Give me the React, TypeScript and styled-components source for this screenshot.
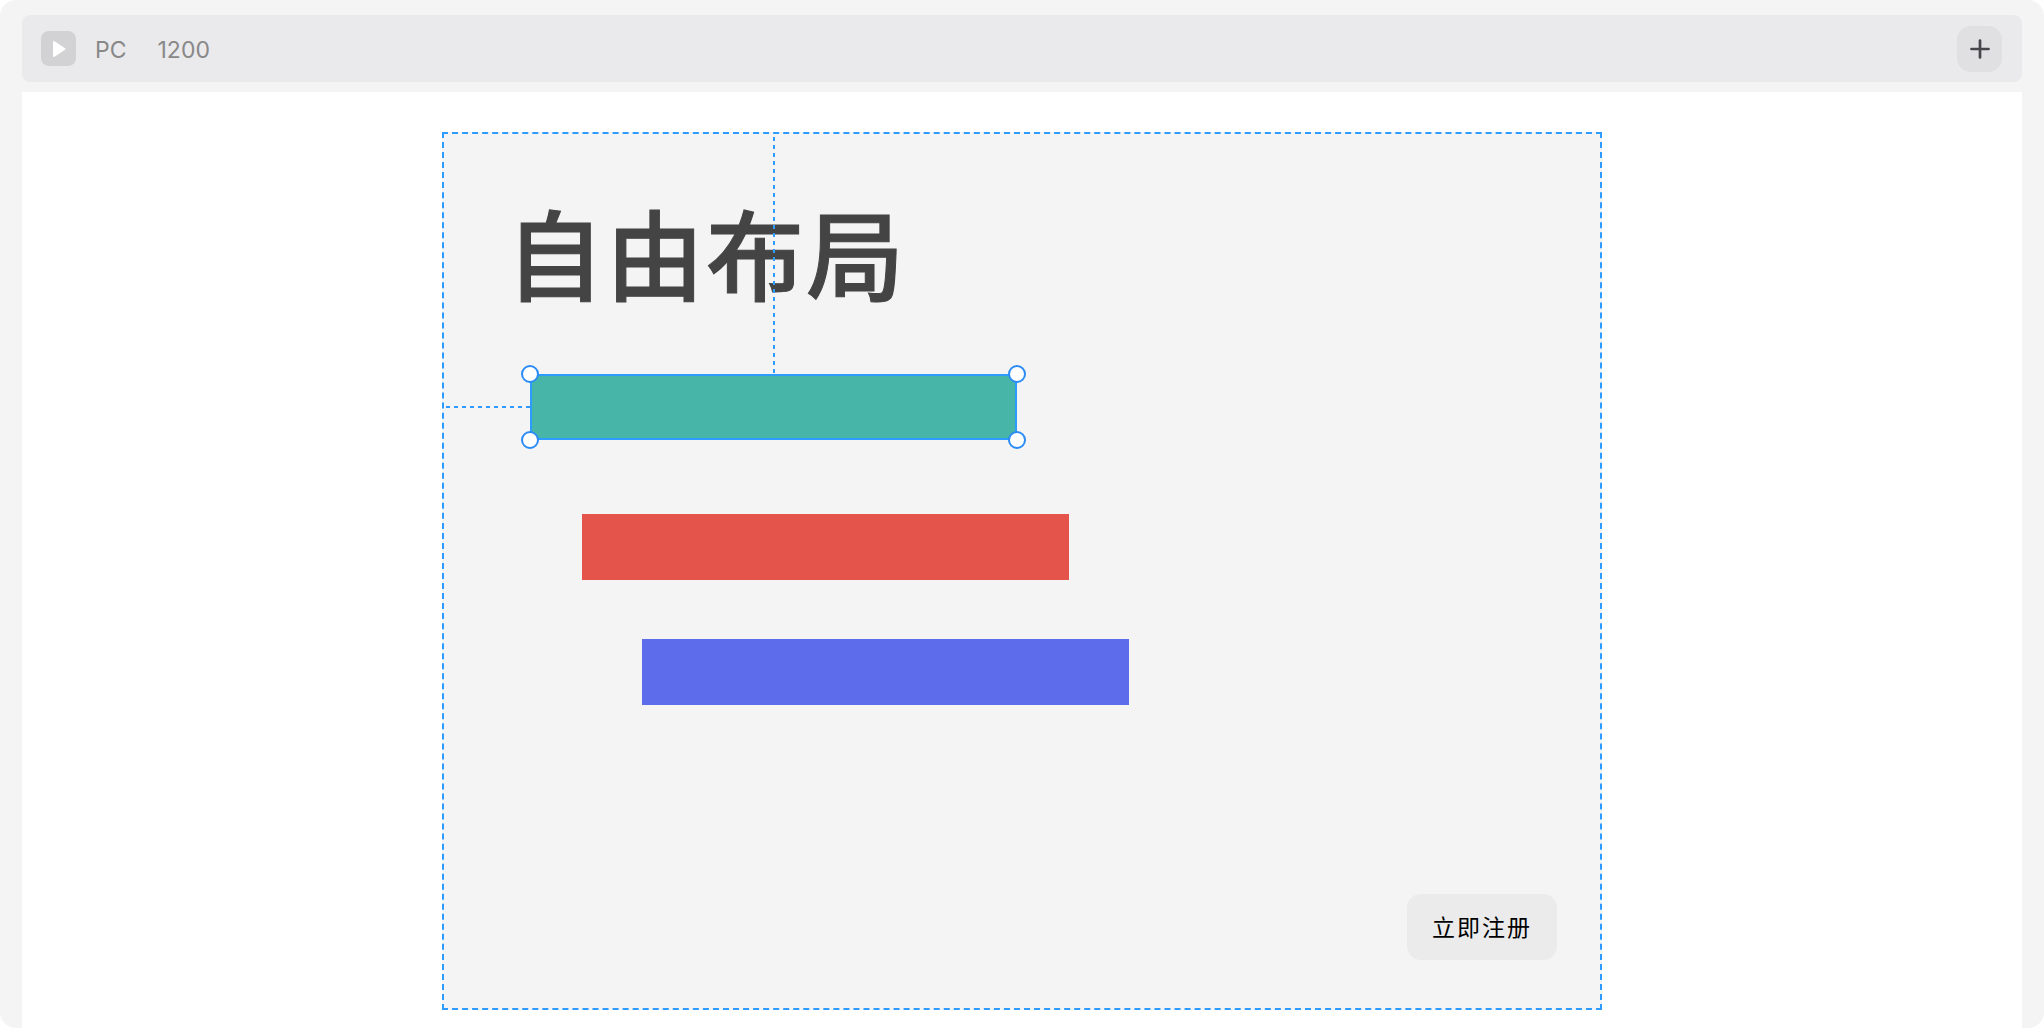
import React from "react";
import styled, { createGlobalStyle } from "styled-components";

const GlobalStyle = createGlobalStyle`
  *, *::before, *::after { box-sizing: border-box; }
  body { margin: 0; background: #ffffff; }
  button { border: 0; padding: 0; font: inherit; cursor: pointer; }
`;

const cjk = `"Noto Sans CJK SC", "Noto Sans", sans-serif`;
const accent = "#2d9bff";

const Shell = styled.div`
  display: flex;
  flex-direction: column;
  gap: 10px;
  min-height: 100vh;
  padding: 15px 22px 0;
  border-radius: 16px;
  background: #f4f4f4;
  font-family: Inter, ${cjk};
`;

const Toolbar = styled.header`
  display: flex;
  align-items: center;
  height: 67px;
  padding: 0 20px 0 19px;
  border-radius: 8px;
  background: #eaeaec;
`;

const PlayButton = styled.button`
  display: grid;
  place-items: center;
  width: 35px;
  height: 35px;
  margin-right: 19px;
  border-radius: 8px;
  background: #d2d2d4;
`;

const DeviceInfo = styled.div`
  display: flex;
  flex: 1;
  gap: 31px;
  padding-top: 2px;
  color: #888888;
  font-size: 23px;
  line-height: 32px;
`;

const AddButton = styled.button`
  display: grid;
  place-items: center;
  width: 45px;
  height: 46px;
  border-radius: 14px;
  background: #e0e0e2;
`;

const Page = styled.main`
  display: flex;
  flex: 1;
  flex-direction: column;
  align-items: center;
  padding: 40px 0 18px;
  background: #ffffff;
`;

const Canvas = styled.section`
  position: relative;
  flex: 1;
  width: 58%;
  min-width: 720px;
  min-height: 760px;
  border: 2px dashed ${accent};
  background: #f4f4f4;
`;

const Title = styled.h1`
  position: absolute;
  left: 62px;
  top: 44px;
  margin: 0;
  color: #444444;
  font-family: ${cjk};
  font-size: 98px;
  font-weight: 500;
  line-height: 144px;
  letter-spacing: 2px;
  white-space: nowrap;
  -webkit-text-stroke: 1px #444444;
`;

const Block = styled.div<{ $x: number; $y: number; $color: string }>`
  position: absolute;
  left: ${(p) => p.$x}px;
  top: ${(p) => p.$y}px;
  width: 487px;
  height: 66px;
  background: ${(p) => p.$color};
`;

const SelectedBlock = styled(Block)`
  border: 2px solid ${accent};
`;

const GuideX = styled.span`
  position: absolute;
  right: 100%;
  top: 30px;
  width: 86px;
  height: 2px;
  background: repeating-linear-gradient(to right, ${accent} 0 4px, transparent 4px 8px);
`;

const GuideY = styled.span`
  position: absolute;
  bottom: 100%;
  left: calc(50% - 1px);
  width: 2px;
  height: 239px;
  background: repeating-linear-gradient(to bottom, ${accent} 0 4px, transparent 4px 8px);
`;

const Handle = styled.span<{ $right?: boolean; $bottom?: boolean }>`
  position: absolute;
  ${(p) => (p.$right ? "right" : "left")}: -11px;
  ${(p) => (p.$bottom ? "bottom" : "top")}: -11px;
  width: 18px;
  height: 18px;
  border: 2px solid #2b8cf6;
  border-radius: 50%;
  background: #ffffff;
`;

const SignUp = styled.button`
  position: absolute;
  right: 43px;
  bottom: 48px;
  width: 150px;
  height: 66px;
  padding-bottom: 3px;
  border-radius: 14px;
  background: #ebebeb;
  color: #000000;
  && {
    font-family: ${cjk};
    font-size: 23px;
    line-height: 34px;
    letter-spacing: 2px;
  }
`;

export default function App() {
  return (
    <>
      <GlobalStyle />
      <Shell>
        <Toolbar>
          <PlayButton aria-label="Preview">
            <svg width="14" height="18" viewBox="0 0 14 18">
              <path
                d="M2 2v14l10.500-7z"
                fill="#fff"
                stroke="#fff"
                strokeWidth="2"
                strokeLinejoin="round"
              />
            </svg>
          </PlayButton>
          <DeviceInfo>
            <span>PC</span>
            <span>1200</span>
          </DeviceInfo>
          <AddButton aria-label="Add">
            <svg width="20" height="20" viewBox="0 0 20 20">
              <path
                d="M10 1.500v17M1.500 10h17"
                stroke="#47474b"
                strokeWidth="2.700"
                strokeLinecap="round"
              />
            </svg>
          </AddButton>
        </Toolbar>
        <Page>
          <Canvas>
            <Title>自由布局</Title>
            <SelectedBlock $x={86} $y={240} $color="#48b5a9">
              <GuideX />
              <GuideY />
              <Handle />
              <Handle $right />
              <Handle $bottom />
              <Handle $right $bottom />
            </SelectedBlock>
            <Block $x={138} $y={380} $color="#e5544b" />
            <Block $x={198} $y={505} $color="#5d6cea" />
            <SignUp>立即注册</SignUp>
          </Canvas>
        </Page>
      </Shell>
    </>
  );
}
